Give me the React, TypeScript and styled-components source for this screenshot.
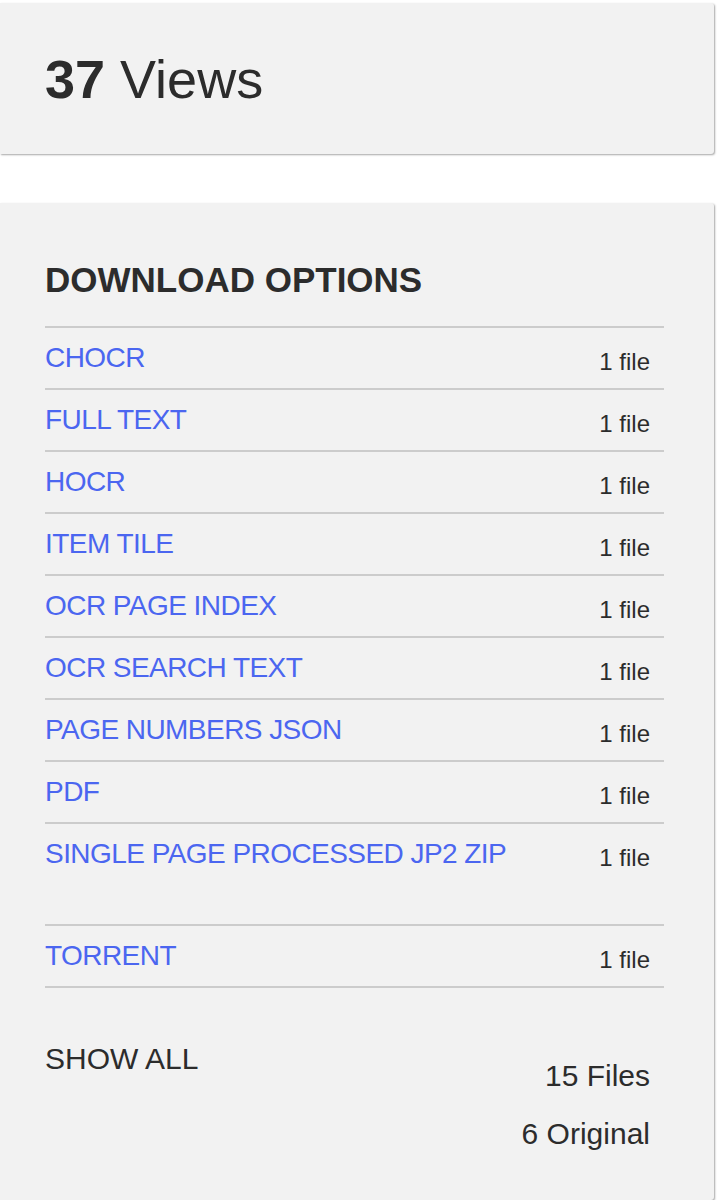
import styled, { createGlobalStyle } from "styled-components";

const GlobalStyle = createGlobalStyle`
  html, body {
    margin: 0;
    padding: 0;
    background: #ffffff;
  }
  body {
    font-family: "Liberation Sans", Arial, Helvetica, sans-serif;
    color: #2c2c2c;
  }
`;

const DOWNLOADS = [
  { label: "CHOCR", count: "1 file" },
  { label: "FULL TEXT", count: "1 file" },
  { label: "HOCR", count: "1 file" },
  { label: "ITEM TILE", count: "1 file" },
  { label: "OCR PAGE INDEX", count: "1 file" },
  { label: "OCR SEARCH TEXT", count: "1 file" },
  { label: "PAGE NUMBERS JSON", count: "1 file" },
  { label: "PDF", count: "1 file" },
  { label: "SINGLE PAGE PROCESSED JP2 ZIP", count: "1 file", tall: true },
  { label: "TORRENT", count: "1 file" },
];

const Page = styled.div`
  display: flex;
  flex-direction: column;
  gap: 49px;
  padding-top: 3px;
  width: 714px;
`;

const Panel = styled.section<{ $pt: number; $pb: number }>`
  background: #f2f2f2;
  border-radius: 0 3px 3px 0;
  box-shadow: 1px 1px 2px rgba(0, 0, 0, 0.35);
  padding: ${(p) => p.$pt}px 50px ${(p) => p.$pb}px 45px;
`;

const Views = styled.h1`
  margin: 0;
  font-size: 54px;
  font-weight: 400;
  line-height: normal;
  color: #2c2c2c;

  strong {
    font-weight: 700;
  }
`;

const Heading = styled.h2`
  margin: 0 0 26px;
  font-size: 35px;
  font-weight: 700;
  line-height: normal;
  color: #2c2c2c;
`;

const List = styled.ul`
  list-style: none;
  margin: 0;
  padding: 0;
  border-top: 2px solid #cccccc;
`;

const Row = styled.li<{ $tall?: boolean }>`
  display: flex;
  justify-content: space-between;
  align-items: flex-start;
  height: ${(p) => (p.$tall ? 100 : 60)}px;
  border-bottom: 2px solid #cccccc;
  padding-right: 14px;
`;

const Link = styled.a`
  padding-top: 14px;
  font-size: 28px;
  letter-spacing: -0.55px;
  line-height: normal;
  color: #4b66f0;
  text-decoration: none;
  cursor: pointer;
`;

const Count = styled.span`
  padding-top: 20px;
  font-size: 24px;
  line-height: normal;
  color: #2c2c2c;
`;

const Footer = styled.div`
  display: flex;
  justify-content: space-between;
  align-items: flex-start;
  margin-top: 54px;
  padding-right: 14px;
`;

const ShowAll = styled.a`
  font-size: 30px;
  line-height: normal;
  color: #2c2c2c;
  cursor: pointer;
`;

const Totals = styled.div`
  display: flex;
  flex-direction: column;
  align-items: flex-end;
  gap: 24px;
  padding-top: 17px;
  font-size: 30px;
  line-height: normal;
`;

export default function App() {
  return (
    <>
      <GlobalStyle />
      <Page>
        <Panel $pt={45} $pb={44}>
          <Views>
            <strong>37</strong> Views
          </Views>
        </Panel>
        <Panel $pt={57} $pb={49}>
          <Heading>DOWNLOAD OPTIONS</Heading>
          <List>
            {DOWNLOADS.map((d) => (
              <Row key={d.label} $tall={d.tall}>
                <Link>{d.label}</Link>
                <Count>{d.count}</Count>
              </Row>
            ))}
          </List>
          <Footer>
            <ShowAll>SHOW ALL</ShowAll>
            <Totals>
              <span>15 Files</span>
              <span>6 Original</span>
            </Totals>
          </Footer>
        </Panel>
      </Page>
    </>
  );
}
